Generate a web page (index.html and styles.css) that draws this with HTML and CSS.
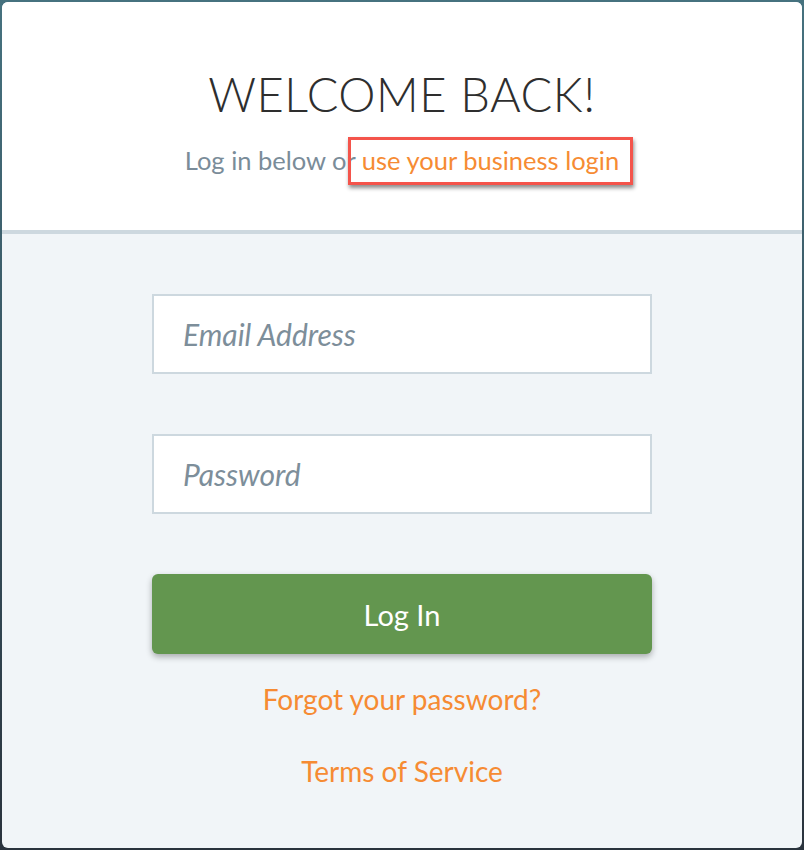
FILE: index.html
```html
<!DOCTYPE html>
<html>
<head>
<meta charset="utf-8">
<link rel="stylesheet" href="styles.css">
</head>
<body>
<div class="card">
  <header class="head">
    <h1 class="title">WELCOME BACK!</h1>
    <p class="sub">Log in below or <a class="biz" href="#">use your business login</a></p>
  </header>
  <main class="body">
    <form class="form">
      <input class="field" type="email" placeholder="Email Address">
      <input class="field" type="password" placeholder="Password">
      <button class="btn" type="button">Log In</button>
    </form>
    <a class="link forgot" href="#">Forgot your password?</a>
    <a class="link terms" href="#">Terms of Service</a>
  </main>
</div>
</body>
</html>
```
FILE: styles.css
```css
html, body {
  margin: 0;
  padding: 0;
}
body {
  width: 804px;
  height: 850px;
  background: linear-gradient(180deg, #46727f 0%, #36505d 55%, #2a333d 100%);
  font-family: Lato, "Noto Sans", sans-serif;
  box-sizing: border-box;
  padding: 2px;
}
.card {
  height: 846px;
  border-radius: 6px;
  overflow: hidden;
  background: #f1f5f8;
  display: flex;
  flex-direction: column;
}
.head {
  background: #fff;
  height: 228px;
  border-bottom: 4px solid #cdd8df;
  text-align: center;
  box-sizing: content-box;
}
.title {
  margin: 0;
  padding-top: 66px;
  font-weight: 300;
  font-size: 47px;
  line-height: 52px;
  color: #2e2e2e;
  letter-spacing: 0.5px;
}
.sub {
  margin: 25px 0 0;
  font-size: 25.5px;
  line-height: 30px;
  color: #7a8c99;
}
.biz {
  color: #f68b33;
  text-decoration: none;
  position: relative;
}
.biz::after {
  content: "";
  position: absolute;
  left: -14px;
  right: -14px;
  top: -8px;
  bottom: -10px;
  border: 3px solid #f4544b;
  box-shadow: 1px 3px 4px rgba(0, 0, 0, 0.45);
}
.body {
  flex: 1;
  display: flex;
  flex-direction: column;
  align-items: center;
  padding-top: 60px;
}
.form {
  width: 500px;
  display: flex;
  flex-direction: column;
  gap: 60px;
}
.field {
  height: 80px;
  box-sizing: border-box;
  border: 2px solid #cdd8df;
  background: #fff;
  padding: 0 0 0 29px;
  font-family: Lato, sans-serif;
  font-size: 30px;
  outline: none;
}
.field::placeholder {
  color: #7d8e9a;
  font-style: italic;
  opacity: 1;
}
.btn {
  height: 80px;
  border: 0;
  border-radius: 6px;
  background: #63964f;
  color: #fff;
  font-family: Lato, sans-serif;
  font-size: 29px;
  box-shadow: 0 3px 6px rgba(0, 0, 0, 0.3);
}
.link {
  color: #f68b33;
  text-decoration: none;
  font-size: 28px;
  line-height: 34px;
}
.forgot {
  margin-top: 28px;
}
.terms {
  margin-top: 38px;
}
```
